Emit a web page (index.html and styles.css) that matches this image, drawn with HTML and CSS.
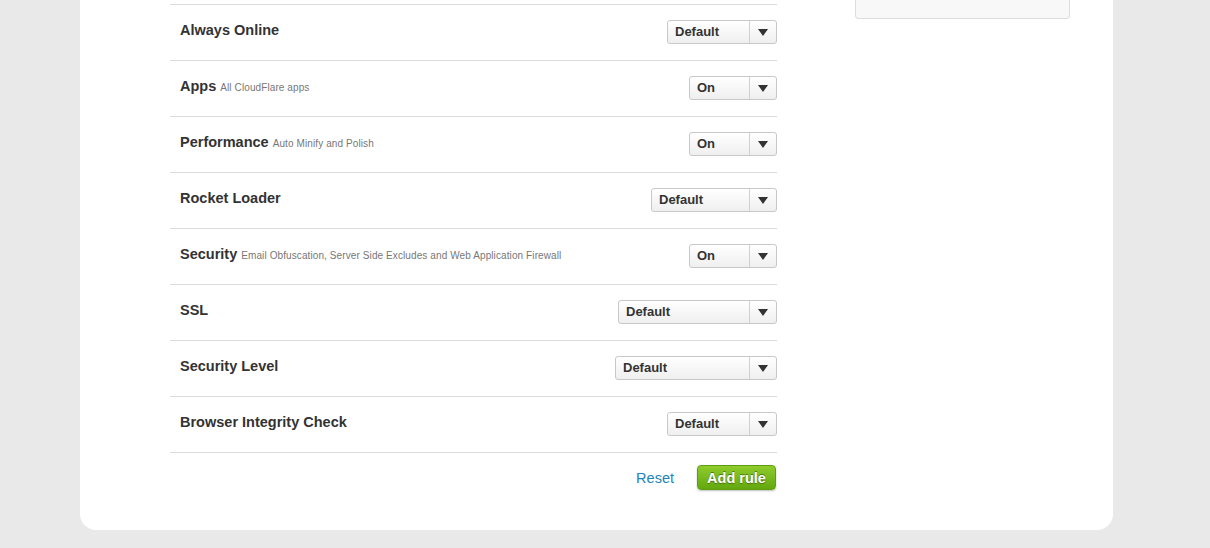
FILE: index.html
```html
<!DOCTYPE html>
<html>
<head>
<meta charset="utf-8">
<link rel="stylesheet" href="styles.css">
</head>
<body>
<div class="page">
  <div class="card">
    <div class="main">
      <div class="rows">
        <div class="row"><div class="label">Always Online</div><div class="select w110"><span class="val">Default</span><span class="arrow"><i></i></span></div></div>
        <div class="row"><div class="label">Apps <span class="sub">All CloudFlare apps</span></div><div class="select w88"><span class="val">On</span><span class="arrow"><i></i></span></div></div>
        <div class="row"><div class="label">Performance <span class="sub">Auto Minify and Polish</span></div><div class="select w88"><span class="val">On</span><span class="arrow"><i></i></span></div></div>
        <div class="row"><div class="label">Rocket Loader</div><div class="select w126"><span class="val">Default</span><span class="arrow"><i></i></span></div></div>
        <div class="row"><div class="label">Security <span class="sub">Email Obfuscation, Server Side Excludes and Web Application Firewall</span></div><div class="select w88"><span class="val">On</span><span class="arrow"><i></i></span></div></div>
        <div class="row"><div class="label">SSL</div><div class="select w159"><span class="val">Default</span><span class="arrow"><i></i></span></div></div>
        <div class="row"><div class="label">Security Level</div><div class="select w162"><span class="val">Default</span><span class="arrow"><i></i></span></div></div>
        <div class="row"><div class="label">Browser Integrity Check</div><div class="select w110"><span class="val">Default</span><span class="arrow"><i></i></span></div></div>
      </div>
      <div class="footer">
        <a class="reset" href="#">Reset</a>
        <button class="add">Add rule</button>
      </div>
    </div>
    <div class="side">
      <div class="sidebox"></div>
    </div>
  </div>
</div>
</body>
</html>
```

FILE: styles.css
```css
html, body {
  margin: 0;
  padding: 0;
}
body {
  background: #e9e9e9;
  font-family: "Liberation Sans", Arial, sans-serif;
  color: #333;
  height: 548px;
  overflow: hidden;
}
.page {
  padding-left: 80px;
}
.card {
  width: 1033px;
  box-sizing: border-box;
  background: #fff;
  border-radius: 0 0 16px 16px;
  padding: 0 43px 40px 90px;
  display: flex;
  gap: 78px;
}
.main {
  width: 607px;
  padding-top: 4px;
}
.rows {
  border-bottom: 1px solid #dcdcdc;
}
.row {
  border-top: 1px solid #dcdcdc;
  height: 55px;
  display: flex;
  align-items: center;
  justify-content: space-between;
  padding-left: 10px;
}
.label {
  font-size: 14.5px;
  font-weight: bold;
  color: #333;
  margin-top: -5px;
}
.sub {
  font-size: 10px;
  font-weight: normal;
  color: #777;
  letter-spacing: 0.1px;
}
.select {
  height: 24px;
  box-sizing: border-box;
  border: 1px solid #c8c8c8;
  border-radius: 3px;
  background: linear-gradient(#ffffff, #efefef);
  display: flex;
  align-items: stretch;
  margin-top: -1px;
}
.w88 { width: 88px; }
.w110 { width: 110px; }
.w126 { width: 126px; }
.w159 { width: 159px; }
.w162 { width: 162px; }
.val {
  flex: 1;
  font-size: 13px;
  font-weight: bold;
  color: #333;
  padding-left: 7px;
  line-height: 21px;
}
.arrow {
  width: 26px;
  border-left: 1px solid #d0d0d0;
  display: flex;
  align-items: center;
  justify-content: center;
}
.arrow i {
  display: block;
  width: 0;
  height: 0;
  border-left: 5px solid transparent;
  border-right: 5px solid transparent;
  border-top: 7px solid #333;
}
.footer {
  display: flex;
  justify-content: flex-end;
  align-items: center;
  gap: 23px;
  margin-top: 12px;
  padding-right: 1px;
}
.reset {
  font-size: 14.5px;
  color: #2384b9;
  text-decoration: none;
}
.add {
  height: 25px;
  width: 79px;
  box-sizing: border-box;
  border: 1px solid #5e9d12;
  border-radius: 4px;
  background: linear-gradient(#8fcb2c, #62a80e);
  color: #fff;
  font-family: "Liberation Sans", Arial, sans-serif;
  font-size: 14.5px;
  font-weight: bold;
  text-shadow: 0 -1px 0 #4a7d0c, 0 1px 1px rgba(0,0,0,0.35);
  box-shadow: 0 1px 2px rgba(0,0,0,0.25);
  padding: 0;
  line-height: 22px;
}
.side {
  width: 215px;
}
.sidebox {
  height: 19px;
  box-sizing: border-box;
  background: #f8f8f8;
  border: 1px solid #dcdcdc;
  border-top: none;
  border-radius: 0 0 4px 4px;
}
```
